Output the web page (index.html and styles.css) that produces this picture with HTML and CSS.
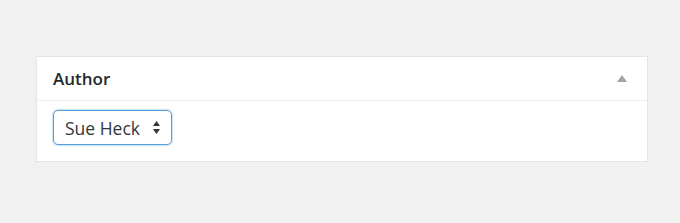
FILE: index.html
```
<!DOCTYPE html>
<html lang="en">
<head>
    <meta charset="UTF-8">
    <title>Author</title>
    <link rel="stylesheet" href="styles.css">
</head>
<body>
    <div class="postbox">
        <div class="postbox-header">
            <h2>Author</h2>
            <span class="toggle-arrow"></span>
        </div>
        <div class="inside">
            <div class="author-select">
                <span>Sue Heck</span>
                <svg width="7" height="13" viewBox="0 0 7 13">
                    <path d="M3.5 0 L7 5 L0 5 Z M0 8 L7 8 L3.5 13 Z" fill="#32373c"/>
                </svg>
            </div>
        </div>
    </div>
</body>
</html>
```

FILE: styles.css
```
body {
    margin: 0;
    padding: 56px 32px 0 36px;
    background: #f1f1f1;
    font-family: "Open Sans", Arial, sans-serif;
    color: #23282d;
}

.postbox {
    background: white;
    border: 1px solid #e5e5e5;
    box-shadow: 0 1px 1px rgba(0,0,0,0.04);
}

/* Header */
.postbox-header {
    display: flex;
    justify-content: space-between;
    align-items: center;
    height: 43px;
    padding: 0 20px 0 16px;
    border-bottom: 1px solid #eee;
}

.postbox-header h2 {
    margin: 0;
    font-size: 17px;
    font-weight: 600;
}

.toggle-arrow {
    width: 0;
    height: 0;
    border-left: 5px solid transparent;
    border-right: 5px solid transparent;
    border-bottom: 7px solid #a0a5aa;
}

/* Select */
.inside {
    padding: 9px 16px 16px;
}

.author-select {
    display: inline-flex;
    align-items: center;
    justify-content: space-between;
    box-sizing: border-box;
    width: 119px;
    height: 35px;
    padding: 0 11px 0 11px;
    border: 1px solid #5b9dd9;
    border-radius: 5px;
    box-shadow: 0 0 2px rgba(30,140,190,0.8);
    font-size: 17.5px;
    color: #32373c;
}
```
